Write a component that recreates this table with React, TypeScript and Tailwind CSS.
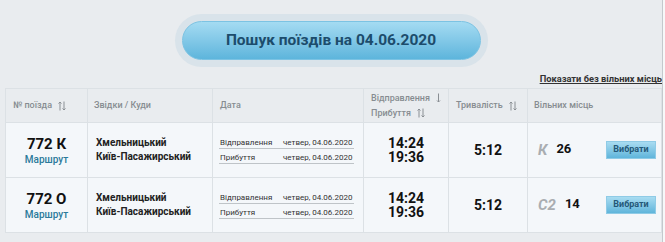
import React from "react";

const SortIcon = () => (
  <svg width="8" height="10" viewBox="0 0 8 10" className="inline-block ml-[6px]" fill="none" stroke="#8a8f94" strokeWidth="1">
    <path d="M2 9.5V1M0.5 2.5L2 1L3.5 2.5" />
    <path d="M6 0.5V9M4.5 7.5L6 9L7.5 7.5" />
  </svg>
);

const DownIcon = () => (
  <svg width="5" height="10" viewBox="0 0 5 10" className="inline-block ml-[6px]" fill="none" stroke="#8a8f94" strokeWidth="1">
    <path d="M2.5 0.5V9M1 7.5L2.5 9L4 7.5" />
  </svg>
);

type Row = { num: string; cls: string; seats: string };

const rows: Row[] = [
  { num: "772 К", cls: "К", seats: "26" },
  { num: "772 О", cls: "С2", seats: "14" },
];

const cols = "grid grid-cols-[81px_125px_151px_85px_79px_136px]";

export default function App() {
  return (
    <div className="flex w-[665px] h-[242px] bg-[#e9ecef] overflow-hidden" style={{ fontFamily: "Roboto, 'Liberation Sans', sans-serif" }}>
      <div className="w-[662px] flex flex-col">
        <div className="flex justify-center pt-[14px]">
          <div className="w-[313px] h-[53px] p-[7px] rounded-full bg-[#d9e3ea]">
            <div className="h-[39px] rounded-full bg-gradient-to-b from-[#a4dbf2] to-[#5db5dc] border border-[#7cc3e3] flex items-center justify-center">
              <span className="text-[15.5px] font-bold text-[#1c4c6c]">Пошук поїздів на 04.06.2020</span>
            </div>
          </div>
        </div>
        <div className="flex justify-end mt-[5px] h-[14px]">
          <span className="text-[9.3px] font-bold text-[#333] underline leading-[14px]">Показати без вільних місць</span>
        </div>
        <div className="ml-[5px] mt-[2px] border border-[#dce1e5] bg-[#f4f7fa]">
          <div className={`${cols} h-[33px] bg-[#e9ecef] text-[9px] font-medium text-[#878c91]`}>
            <div className="flex items-center pl-[7px]">№ поїзда<SortIcon /></div>
            <div className="flex items-center pl-[6px] border-l border-[#dce1e5]">Звідки / Куди</div>
            <div className="flex items-center pl-[7px] border-l border-[#dce1e5]">Дата</div>
            <div className="flex flex-col justify-center pl-[7px] border-l border-[#dce1e5] leading-[15px]">
              <div className="flex items-center">Відправлення<DownIcon /></div>
              <div className="flex items-center">Прибуття<SortIcon /></div>
            </div>
            <div className="flex items-center pl-[7px] border-l border-[#dce1e5]">Тривалість<SortIcon /></div>
            <div className="flex items-center pl-[6px] border-l border-[#dce1e5]">Вільних місць</div>
          </div>
          {rows.map((r) => (
            <div key={r.num} className={`${cols} h-[55px] border-t border-[#dce1e5]`}>
              <div className="flex flex-col items-center justify-center">
                <span className="text-[15px] font-bold text-[#111] leading-[18px]">{r.num}</span>
                <span className="text-[10px] font-medium text-[#2b7a9b] leading-[13px]">Маршрут</span>
              </div>
              <div className="flex flex-col justify-center pl-[8px] border-l border-[#dce1e5] text-[10px] font-bold text-[#222] leading-[14px]">
                <span>Хмельницький</span>
                <span>Київ-Пасажирський</span>
              </div>
              <div className="flex flex-col justify-center pl-[6px] pr-[9px] border-l border-[#dce1e5] text-[8px] text-[#333] gap-[3px]">
                <div className="flex border-b border-[#bfc4c8] leading-[11px] pl-[1px]">
                  <span className="w-[63px]">Відправлення</span>
                  <span>четвер, 04.06.2020</span>
                </div>
                <div className="flex border-b border-[#bfc4c8] leading-[11px] pl-[1px]">
                  <span className="w-[63px]">Прибуття</span>
                  <span>четвер, 04.06.2020</span>
                </div>
              </div>
              <div className="flex flex-col items-center justify-center border-l border-[#dce1e5] text-[14px] font-bold text-[#111] leading-[14px]">
                <span>14:24</span>
                <span>19:36</span>
              </div>
              <div className="flex items-center justify-center border-l border-[#dce1e5] text-[14px] font-bold text-[#111]">5:12</div>
              <div className="flex items-center border-l border-[#dce1e5] pl-[10px] pr-[7px]">
                <span className="text-[15px] font-bold italic text-[#a9adb1] mt-[1px]">{r.cls}</span>
                <span className="text-[13px] font-bold text-[#111] ml-[9px] -mt-[2px]">{r.seats}</span>
                <button className="ml-auto w-[50px] h-[18px] bg-gradient-to-b from-[#a8dcf1] to-[#5fb5db] border border-[#8fcbe6] text-[9px] font-bold text-[#245878] flex items-center justify-center">
                  Вибрати
                </button>
              </div>
            </div>
          ))}
        </div>
      </div>
      <div className="w-[1px] bg-[#c4c9cd]" />
      <div className="w-[2px] bg-[#f7f8f9]" />
    </div>
  );
}
